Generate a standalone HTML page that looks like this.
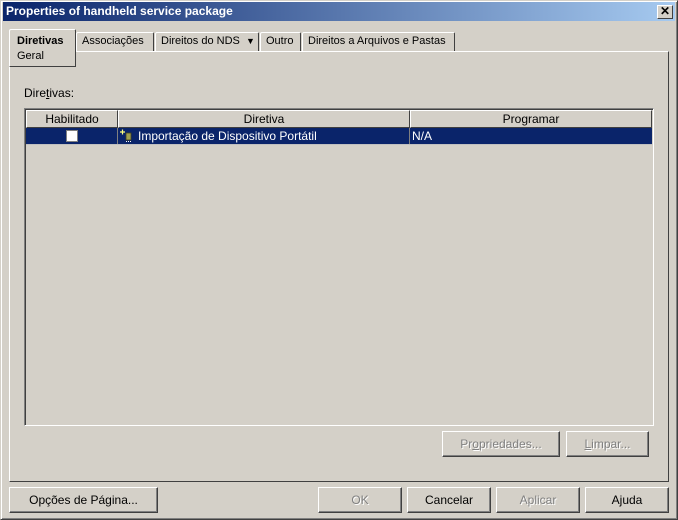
<!DOCTYPE html>
<html><head><meta charset="utf-8"><style>
*{box-sizing:border-box;margin:0;padding:0}
body{width:678px;height:520px;background:#d4d0c8;font-family:"Liberation Sans",sans-serif;font-size:11px;color:#000;position:relative;overflow:hidden}
.a{position:absolute}
.win{left:0;top:0;width:678px;height:520px;border:1px solid;border-color:#d4d0c8 #404040 #404040 #d4d0c8;box-shadow:inset 1px 1px #fff,inset -1px -1px #808080}
.title{left:3px;top:2px;width:672px;height:19px;background:linear-gradient(90deg,#0a246a,#a6caf0);color:#fff;font-weight:bold;font-size:12px;line-height:19px;padding-left:3px}
.close{left:657px;top:5px;width:16px;height:14px;background:#d4d0c8;border:1px solid;border-color:#fff #404040 #404040 #fff;font-size:12px;font-weight:bold;line-height:11px;text-align:center;color:#000}
.tab{top:32px;height:19px;border:1px solid;border-color:#fff #404040 transparent #fff;border-bottom:none;line-height:17px;padding:0 5px;border-radius:2px 2px 0 0;white-space:nowrap}
.panel{left:9px;top:51px;width:660px;height:431px;border:1px solid;border-color:#fff #404040 #404040 #fff}
.btn{height:26px;border:1px solid;border-color:#fff #404040 #404040 #fff;box-shadow:inset -1px -1px #808080;text-align:center;line-height:24px;font-size:12px}
.dis{color:#808080;text-shadow:1px 1px #fff}
.hdr{top:110px;height:18px;border:1px solid;border-color:#fff #404040 #404040 #fff;text-align:center;line-height:16px;font-size:12px}
</style></head><body>
<div class="a win"></div>
<div class="a title">Properties of handheld service package</div>
<div class="a close">✕</div>
<div class="a panel"></div>
<div class="a tab" style="left:76px;width:78px">Associações</div>
<div class="a tab" style="left:155px;width:104px">Direitos do NDS &nbsp;<span style="font-size:9px">▼</span></div>
<div class="a tab" style="left:260px;width:41px">Outro</div>
<div class="a tab" style="left:302px;width:153px">Direitos a Arquivos e Pastas</div>
<div class="a" style="left:9px;top:29px;width:67px;height:38px;background:#d4d0c8;border:1px solid;border-color:#fff #404040 #404040 #fff;border-radius:2px 2px 0 0;padding:4px 0 0 7px;line-height:15px"><b>Diretivas</b><br>Geral</div>
<div class="a" style="left:24px;top:86px;font-size:12px">Dire<u>t</u>ivas:</div>
<div class="a" style="left:24px;top:108px;width:630px;height:318px;border:1px solid;border-color:#808080 #fff #fff #808080;box-shadow:inset 1px 1px #404040"></div>
<div class="a hdr" style="left:26px;width:92px">Habilitado</div>
<div class="a hdr" style="left:118px;width:292px">Diretiva</div>
<div class="a hdr" style="left:410px;width:242px">Programar</div>
<div class="a" style="left:26px;top:128px;width:626px;height:16px;background:#0a246a"></div>
<div class="a" style="left:117px;top:128px;width:1px;height:16px;background:#808080"></div>
<div class="a" style="left:409px;top:128px;width:1px;height:16px;background:#808080"></div>
<div class="a" style="left:26px;top:144px;width:626px;height:1px;background:#c0c0c0"></div>
<div class="a" style="left:66px;top:130px;width:12px;height:12px;background:#fff;border:1px solid #808080"></div>
<svg class="a" style="left:119px;top:129px" width="16" height="14"><path d="M1 3h5M3.5 0.5v5" stroke="#ffff80" stroke-width="1.2"/><rect x="7" y="4" width="5" height="7" fill="#a0a050" stroke="#404020" stroke-width="0.8"/><path d="M7 12.5h5" stroke="#fff" stroke-dasharray="1 1"/></svg>
<div class="a" style="left:138px;top:129px;color:#fff;font-size:12px">Importação de Dispositivo Portátil</div>
<div class="a" style="left:412px;top:129px;color:#fff;font-size:12px">N/A</div>
<div class="a btn dis" style="left:442px;top:431px;width:118px">Pr<u>o</u>priedades...</div>
<div class="a btn dis" style="left:566px;top:431px;width:83px"><u>L</u>impar...</div>
<div class="a btn" style="left:9px;top:487px;width:149px">Opções de Página...</div>
<div class="a btn dis" style="left:318px;top:487px;width:84px">OK</div>
<div class="a btn" style="left:407px;top:487px;width:84px">Cancelar</div>
<div class="a btn dis" style="left:496px;top:487px;width:84px">Aplicar</div>
<div class="a btn" style="left:585px;top:487px;width:84px">A<u>j</u>uda</div>
</body></html>
